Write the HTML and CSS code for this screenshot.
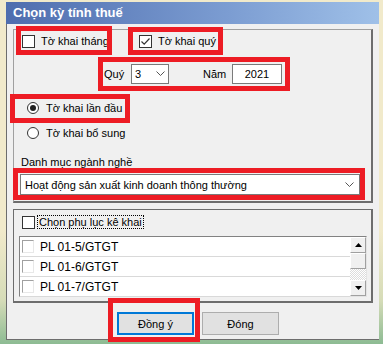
FILE: index.html
```html
<!DOCTYPE html>
<html lang="vi">
<head>
  <meta charset="UTF-8">
  <title>Chọn kỳ tính thuế</title>
  <link rel="stylesheet" href="styles.css">
</head>
<body>
  <div class="window">
    <div class="titlebar">Chọn kỳ tính thuế</div>

    <div class="frame">
      <!-- Period group -->
      <div class="group group-period">
        <div class="row-type">
          <label class="check check-month"><span class="box"></span>Tờ khai tháng</label>
          <label class="check"><span class="box"><svg width="11" height="11" viewBox="0 0 11 11"><path d="M1.5 5.5 L4.2 8.2 L9.5 2.5" fill="none" stroke="#333" stroke-width="1.2"/></svg></span>Tờ khai quý</label>
        </div>

        <div class="row-quarter">
          <span class="lbl-quy">Quý</span>
          <div class="select select-quy">3<svg width="9" height="5" viewBox="0 0 9 5"><path d="M0.5 0.5 L4.5 4.5 L8.5 0.5" fill="none" stroke="#555"/></svg></div>
          <span class="lbl-nam">Năm</span>
          <div class="input-year">2021</div>
        </div>

        <label class="radio radio-first"><span class="dot on"></span>Tờ khai lần đầu</label>
        <label class="radio radio-extra"><span class="dot"></span>Tờ khai bổ sung</label>

        <div class="lbl-branch">Danh mục ngành nghề</div>
        <div class="select select-branch">Hoạt động sản xuất kinh doanh thông thường<svg width="9" height="5" viewBox="0 0 9 5"><path d="M0.5 0.5 L4.5 4.5 L8.5 0.5" fill="none" stroke="#555"/></svg></div>
      </div>

      <!-- Appendix group -->
      <div class="group group-appendix">
        <label class="check check-appendix"><span class="box"></span><span class="focus">Chọn phụ lục kê khai</span></label>
        <div class="listbox">
          <div class="list-rows">
            <div class="list-row"><span class="box3d"></span>PL 01-5/GTGT</div>
            <div class="list-row"><span class="box3d"></span>PL 01-6/GTGT</div>
            <div class="list-row"><span class="box3d"></span>PL 01-7/GTGT</div>
          </div>
          <div class="scrollbar">
            <div class="sb-btn"><svg width="7" height="4" viewBox="0 0 7 4"><path d="M0 4 L3.5 0 L7 4 Z" fill="#000"/></svg></div>
            <div class="sb-thumb"></div>
            <div class="sb-track"></div>
            <div class="sb-btn"><svg width="7" height="4" viewBox="0 0 7 4"><path d="M0 0 L7 0 L3.5 4 Z" fill="#000"/></svg></div>
          </div>
        </div>
      </div>

      <div class="buttons">
        <button class="btn btn-default">Đồn<u>g</u> ý</button>
        <button class="btn">Đón<u>g</u></button>
      </div>
    </div>

    <!-- red annotation marks -->
    <div class="mark mark-month"></div>
    <div class="mark mark-quarter"></div>
    <div class="mark mark-period"></div>
    <div class="mark mark-first"></div>
    <div class="mark mark-branch"></div>
    <div class="mark mark-ok"></div>
  </div>
</body>
</html>
```

FILE: styles.css
```css
* {
  box-sizing: border-box;
}
body {
  margin: 0;
  width: 383px;
  height: 344px;
  overflow: hidden;
  background: linear-gradient(to bottom, #f1eacb 0, #f1eacb 230px, #d6dcb8 300px, #8dbb93 344px);
  font-family: "Liberation Sans", Arial, sans-serif;
  font-size: 11px;
  color: #000;
}
.window {
  position: relative;
  margin: 2px 0 0 6px;
  width: 373px;
  height: 338px;
  background: #f0f0f0;
}
.titlebar {
  height: 22px;
  line-height: 22px;
  padding-left: 7px;
  background: linear-gradient(to right, #4e6dae, #7c9dd2 60%, #9fc0e8);
  color: #fff;
  font-weight: bold;
  font-size: 13px;
}
.frame {
  height: 316px;
  border-left: 1px solid #6d6d6d;
  border-bottom: 1px solid #6d6d6d;
  padding: 5px 0 0 6px;
}
.group {
  width: 360px;
  border: 1px solid #a0a0a0;
  border-right: 2px solid #6d6d6d;
  border-bottom: 2px solid #6d6d6d;
}
.group-period {
  height: 174px;
}
.group-appendix {
  height: 94px;
  margin-top: 6px;
  border-color: #6d6d6d;
}

/* checkboxes and radios */
.check, .radio {
  display: flex;
  align-items: center;
  height: 16px;
}
.check {
  gap: 6px;
}
.box {
  width: 13px;
  height: 13px;
  border: 1px solid #333;
  background: #fff;
  display: flex;
  align-items: center;
  justify-content: center;
}
.row-type {
  display: flex;
  height: 16px;
  margin-top: 3px;
  padding-left: 8px;
}
.check-month {
  width: 117px;
}
.row-quarter {
  display: flex;
  align-items: center;
  height: 21px;
  margin-top: 14px;
  padding-left: 90px;
}
.lbl-quy {
  width: 27px;
}
.lbl-nam {
  width: 29px;
  margin-left: 34px;
}
.select {
  display: flex;
  align-items: center;
  justify-content: space-between;
  background: #fff;
  border: 1px solid #7a7a7a;
}
.select-quy {
  width: 38px;
  height: 20px;
  padding: 0 3px 0 3px;
}
.input-year {
  width: 50px;
  height: 20px;
  line-height: 18px;
  text-align: center;
  background: #fff;
  border: 1px solid #7a7a7a;
}
.radio {
  gap: 7px;
  padding-left: 13px;
}
.radio-first {
  margin-top: 16px;
}
.radio-extra {
  margin-top: 9px;
}
.dot {
  width: 12px;
  height: 12px;
  border: 1px solid #333;
  border-radius: 50%;
  background: #fff;
  display: flex;
  align-items: center;
  justify-content: center;
}
.dot.on::after {
  content: "";
  width: 6px;
  height: 6px;
  border-radius: 50%;
  background: #222;
}
.lbl-branch {
  height: 14px;
  line-height: 14px;
  margin-top: 14px;
  padding-left: 7px;
}
.select-branch {
  width: 340px;
  height: 21px;
  margin: 5px 0 0 6px;
  padding: 0 5px 0 4px;
}

/* appendix list */
.check-appendix {
  margin-top: 4px;
  padding-left: 8px;
  gap: 3px;
}
.focus {
  outline: 1px dotted #000;
  padding: 0 1px;
  line-height: 12px;
}
.listbox {
  display: flex;
  width: 348px;
  height: 61px;
  margin: 6px 0 0 5px;
  border: 1px solid #828282;
  border-right-color: #e3e3e3;
  border-bottom-color: #e3e3e3;
  background: #fff;
}
.list-rows {
  flex: 1;
  font-size: 12px;
}
.list-row {
  display: flex;
  align-items: center;
  gap: 6px;
  height: 20px;
  padding-left: 2px;
  border-bottom: 1px solid #d9d9d9;
}
.box3d {
  width: 12px;
  height: 13px;
  border: 1px solid #a0a0a0;
  border-right-color: #e8e8e8;
  border-bottom-color: #e8e8e8;
  background: #fff;
}
.scrollbar {
  width: 16px;
  display: flex;
  flex-direction: column;
}
.sb-btn, .sb-thumb {
  height: 16px;
  display: flex;
  align-items: center;
  justify-content: center;
  background: #f0f0f0;
  border: 1px solid #fff;
  border-right-color: #a0a0a0;
  border-bottom-color: #a0a0a0;
}
.sb-track {
  flex: 1;
  background: repeating-conic-gradient(#fff 0 25%, #dcdcdc 0 50%) 0 0 / 2px 2px;
}

/* buttons */
.buttons {
  display: flex;
  gap: 8px;
  margin: 9px 0 0 104px;
}
.btn {
  width: 77px;
  height: 23px;
  background: #e1e1e1;
  border: 1px solid #adadad;
  font-family: "Liberation Sans", Arial, sans-serif;
  font-size: 11px;
  color: #000;
  padding: 0;
}
.btn-default {
  border: 2px solid #0078d7;
}

/* red annotation marks */
.mark {
  position: absolute;
  border: 5px solid #ed1c24;
}
.mark-month {
  left: 10px;
  top: 24px;
  width: 96px;
  height: 29px;
}
.mark-quarter {
  left: 122px;
  top: 25px;
  width: 95px;
  height: 28px;
}
.mark-period {
  left: 92px;
  top: 55px;
  width: 192px;
  height: 34px;
}
.mark-first {
  left: 4px;
  top: 92px;
  width: 120px;
  height: 29px;
}
.mark-branch {
  left: 7px;
  top: 166px;
  width: 352px;
  height: 32px;
}
.mark-ok {
  left: 102px;
  top: 296px;
  width: 92px;
  height: 44px;
}
```
